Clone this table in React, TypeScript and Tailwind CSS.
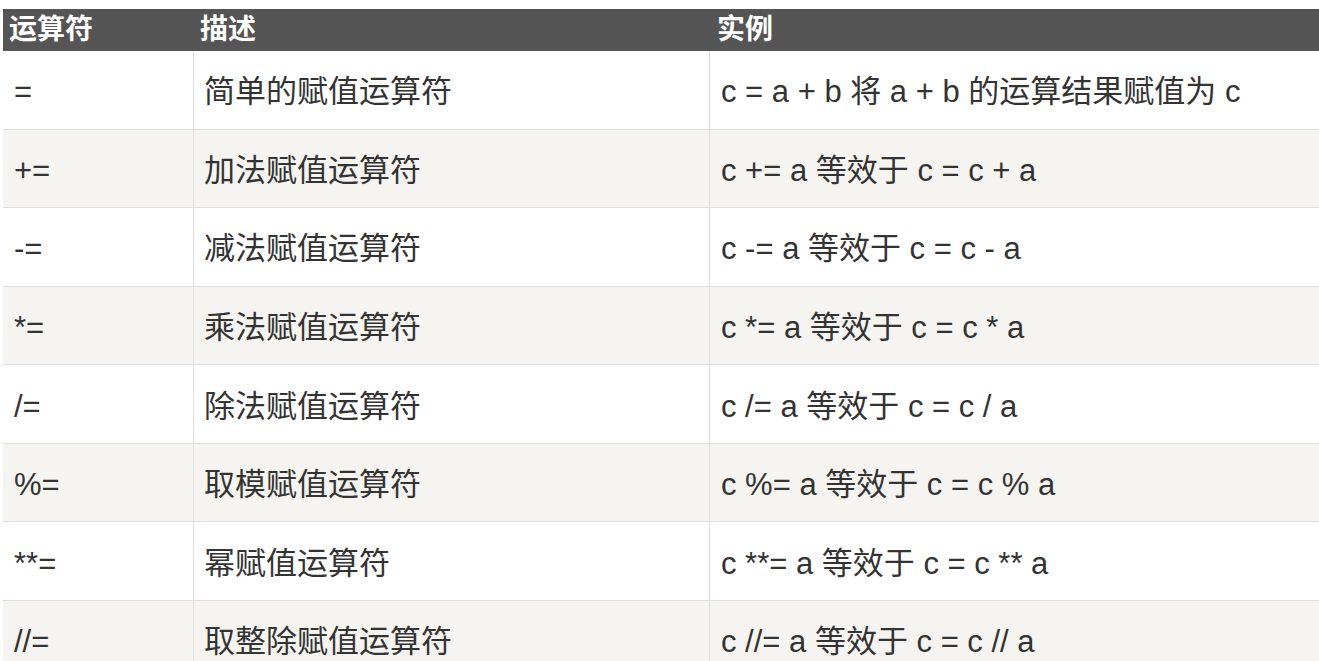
const rows: [string, string, string][] = [
  ["=", "简单的赋值运算符", "c = a + b 将 a + b 的运算结果赋值为 c"],
  ["+=", "加法赋值运算符", "c += a 等效于 c = c + a"],
  ["-=", "减法赋值运算符", "c -= a 等效于 c = c - a"],
  ["*=", "乘法赋值运算符", "c *= a 等效于 c = c * a"],
  ["/=", "除法赋值运算符", "c /= a 等效于 c = c / a"],
  ["%=", "取模赋值运算符", "c %= a 等效于 c = c % a"],
  ["**=", "幂赋值运算符", "c **= a 等效于 c = c ** a"],
  ["//=", "取整除赋值运算符", "c //= a 等效于 c = c // a"],
];

const font = { fontFamily: '"Liberation Sans", "Noto Sans CJK SC", sans-serif' };

export default function App() {
  return (
    <div className="h-[661px] w-[1319px] overflow-hidden bg-white pt-[9px] pl-[3px]" style={font}>
      {/* header */}
      <div className="grid h-[42px] grid-cols-[191px_516px_1fr] items-center bg-[#555555] text-[28px] font-bold leading-none text-white">
        <div className="pl-[6px]">运算符</div>
        <div className="pl-[6px]">描述</div>
        <div className="pl-[7px]">实例</div>
      </div>

      {rows.map(([op, desc, example], i) => (
        <div
          key={op}
          className={`grid h-[78.57px] grid-cols-[191px_516px_1fr] border-b border-[#dedede] text-[31px] leading-none text-[#333333] ${
            i % 2 === 1 ? "bg-[#f6f4f0]" : "bg-white"
          }`}
        >
          <div className="flex items-center border-r border-[#dedede] pt-[4px] pl-[11px]">{op}</div>
          <div className="flex items-center border-r border-[#dedede] pt-[4px] pl-[10px]">{desc}</div>
          <div className="flex items-center pt-[4px] pl-[11px]">{example}</div>
        </div>
      ))}
    </div>
  );
}
